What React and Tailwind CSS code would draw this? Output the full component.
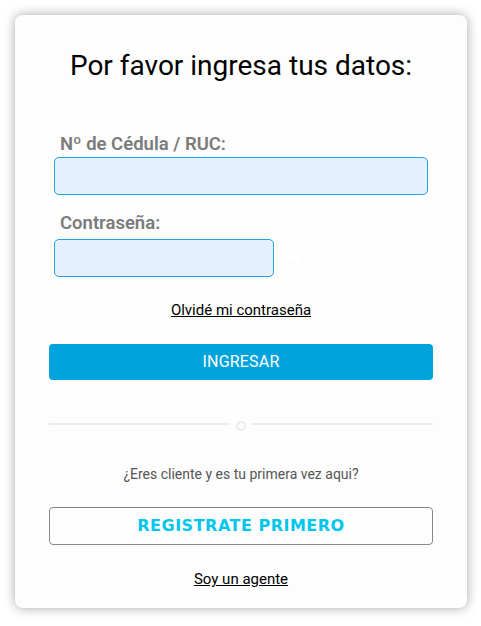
import React from "react";

export default function App() {
  return (
    <div className="w-[481px] h-[626px] bg-white p-[15px]" style={{ fontFamily: "Roboto, 'Noto Sans', sans-serif" }}>
      <div className="w-[452px] h-[593px] rounded-[8px] bg-[#fdfdfd] shadow-[0_0_12px_rgba(0,0,0,0.35)] px-[34px] pt-[33px] flex flex-col">
        <h1 className="text-center text-[28px] leading-[35px] text-black font-normal">Por favor ingresa tus datos:</h1>

        <div className="mt-[50px] px-[5px]">
          <label className="block pl-[6px] text-[18.5px] leading-[22px] font-semibold text-[#7b7b7b]">Nº de Cédula / RUC:</label>
          <input className="mt-[2px] block w-full h-[38px] rounded-[5px] border border-[#1ea3dd] bg-[#e5f0ff] outline-none" />

          <label className="block mt-[17px] pl-[6px] text-[18.5px] leading-[22px] font-semibold text-[#7b7b7b]">Contraseña:</label>
          <div className="mt-[5px] flex items-center gap-[12px]">
            <input type="password" className="block w-[220px] h-[38px] rounded-[5px] border border-[#1ea3dd] bg-[#e5f0ff] outline-none" />
            <svg width="16" height="14" viewBox="0 0 16 14" className="text-white">
              <path d="M1 7 C4 1 12 1 15 7 C12 13 4 13 1 7Z" fill="currentColor" />
            </svg>
          </div>
        </div>

        <a href="#" className="mt-[23px] self-center text-[15px] leading-[20px] text-black underline">Olvidé mi contraseña</a>

        <button className="mt-[24px] h-[36px] w-full rounded-[4px] bg-[#00a3dc] text-white text-[16px] tracking-[0.2px]">INGRESAR</button>

        <div className="mt-[37px] flex items-center">
          <div className="flex-1 h-[2px] bg-[#ececec]" />
          <div className="mx-[6px] w-[10px] h-[10px] rounded-full border-[2px] border-[#ececec] mt-[4px]" />
          <div className="flex-1 h-[2px] bg-[#ececec]" />
        </div>

        <p className="mt-[33px] text-center text-[14px] leading-[20px] text-[#555555]">¿Eres cliente y es tu primera vez aqui?</p>

        <button className="mt-[23px] h-[38px] w-full rounded-[4px] border border-[#888888] bg-transparent text-[#00c6ee] text-[16px] font-bold tracking-[0.5px]" style={{ fontFamily: "'DejaVu Sans', Verdana, sans-serif" }}>REGISTRATE PRIMERO</button>

        <a href="#" className="mt-[24px] self-center text-[15px] leading-[20px] text-black underline">Soy un agente</a>
      </div>
    </div>
  );
}
